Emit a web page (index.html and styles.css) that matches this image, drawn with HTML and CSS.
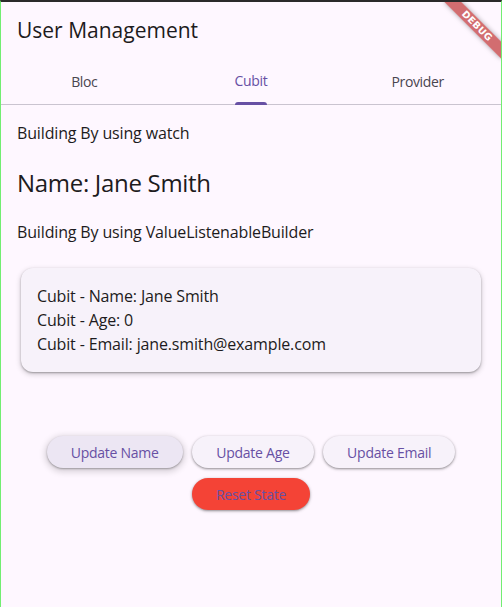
FILE: index.html
```html
<!DOCTYPE html>
<html lang="en">
<head>
<meta charset="utf-8">
<title>User Management</title>
<link rel="stylesheet" href="styles.css">
</head>
<body>
<div class="frame">
  <div class="app">
    <header class="appbar">
      <h1 class="title">User Management</h1>
    </header>
    <nav class="tabs">
      <div class="tab">Bloc</div>
      <div class="tab active"><span class="tab-label">Cubit</span></div>
      <div class="tab">Provider</div>
    </nav>
    <main class="content">
      <p class="caption">Building By using watch</p>
      <p class="name">Name: Jane Smith</p>
      <p class="caption caption-second">Building By using ValueListenableBuilder</p>
      <section class="card">
        <p class="card-line">Cubit - Name: Jane Smith</p>
        <p class="card-line">Cubit - Age: 0</p>
        <p class="card-line">Cubit - Email: jane.smith@example.com</p>
      </section>
      <div class="actions">
        <button class="btn btn-hover">Update Name</button>
        <button class="btn">Update Age</button>
        <button class="btn">Update Email</button>
        <button class="btn btn-reset">Reset State</button>
      </div>
    </main>
    <div class="debug-banner"><div class="ribbon">DEBUG</div></div>
  </div>
</div>
</body>
</html>
```
FILE: styles.css
```css
html, body {
  margin: 0;
  padding: 0;
  height: 100%;
}

body {
  background: #fef7ff;
  font-family: "Open Sans", "Noto Sans", sans-serif;
  color: #1d1b20;
}

.frame {
  box-sizing: border-box;
  height: 100vh;
  border-top: 2px solid #2a2a2a;
  border-left: 1px solid #72ee72;
  border-right: 1px solid #72ee72;
}

.app {
  position: relative;
  overflow: hidden;
  height: 100%;
  background: #fef7ff;
}

.appbar {
  height: 56px;
  padding: 0 16px;
  display: flex;
  align-items: center;
}

.title {
  margin: 0;
  font-size: 21px;
  font-weight: 400;
  line-height: 56px;
  color: #1d1b20;
}

.tabs {
  display: grid;
  grid-template-columns: 1fr 1fr 1fr;
  height: 46px;
  border-bottom: 1px solid #cac4d0;
}

.tab {
  position: relative;
  display: flex;
  justify-content: center;
  align-items: center;
  font-size: 14px;
  letter-spacing: -0.35px;
  color: #49454f;
}

.tab.active {
  color: #6750a4;
}

.tab-label {
  position: relative;
  height: 46px;
  line-height: 46px;
}

.tab.active .tab-label::after {
  content: "";
  position: absolute;
  left: 0;
  right: 0;
  bottom: -1px;
  height: 3px;
  border-radius: 3px 3px 0 0;
  background: #6750a4;
}

.content {
  padding: 16px 16px 0;
}

.caption {
  margin: 0;
  font-size: 16px;
  line-height: 24px;
  letter-spacing: -0.15px;
}

.name {
  margin: 22px 0 0;
  font-size: 24px;
  line-height: 32px;
  letter-spacing: -0.3px;
}

.caption-second {
  margin-top: 21px;
}

.card {
  margin: 24px 4px 0;
  padding: 16px;
  background: #f7f2fa;
  border-radius: 12px;
  box-shadow: 0 1px 2px rgba(0, 0, 0, 0.3), 0 2px 5px 1px rgba(0, 0, 0, 0.15);
}

.card-line {
  margin: 0;
  font-size: 16px;
  line-height: 24px;
  letter-spacing: -0.15px;
}

.actions {
  margin-top: 64px;
  display: flex;
  flex-wrap: wrap;
  justify-content: center;
  gap: 10px 9.5px;
  padding: 0 20px;
}

.btn {
  height: 32px;
  padding: 0 24px;
  border: none;
  border-radius: 16px;
  background: #f7f2fa;
  color: #6750a4;
  font-family: "Open Sans", "Noto Sans", sans-serif;
  font-size: 14px;
  font-weight: 500;
  letter-spacing: -0.25px;
  box-shadow: 0 1px 2px rgba(0, 0, 0, 0.3), 0 1px 3px 1px rgba(0, 0, 0, 0.12);
}

.btn-hover {
  background: #ece6f3;
  box-shadow: 0 1px 2px rgba(0, 0, 0, 0.3), 0 2px 6px 2px rgba(0, 0, 0, 0.15);
}

.btn-reset {
  background: #f44336;
}

.debug-banner {
  position: absolute;
  top: 0;
  right: 0;
  width: 0;
  height: 0;
}

.ribbon {
  position: absolute;
  left: -40px;
  top: 28px;
  width: 80px;
  height: 12px;
  transform-origin: 40px -28px;
  transform: rotate(45deg);
  background: rgba(183, 28, 28, 0.63);
  box-shadow: 0 0 5px rgba(0, 0, 0, 0.35);
  color: #fff;
  font-family: "DejaVu Sans", sans-serif;
  font-size: 9.5px;
  font-weight: 700;
  line-height: 12px;
  text-align: center;
  letter-spacing: 0.3px;
}
```
